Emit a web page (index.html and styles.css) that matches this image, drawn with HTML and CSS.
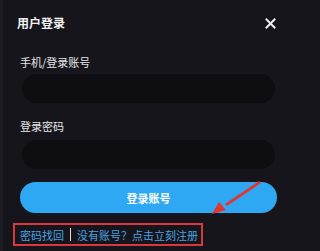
FILE: index.html
```html
<!DOCTYPE html>
<html lang="zh">
<head>
<meta charset="utf-8">
<link rel="stylesheet" href="styles.css">
</head>
<body>
<div class="panel">
  <div class="header">
    <span class="title">用户登录</span>
    <svg class="close" width="11" height="11" viewBox="0 0 11 11"><path d="M1.5 1.5 L9.5 9.5 M9.5 1.5 L1.5 9.5" stroke="#eeeef0" stroke-width="2" stroke-linecap="square"/></svg>
  </div>
  <div class="form">
    <label class="label label-first">手机/登录账号</label>
    <div class="input"></div>
    <label class="label label-second">登录密码</label>
    <div class="input"></div>
    <div class="button">登录账号</div>
  </div>
  <div class="links">
    <span class="link">密码找回</span>
    <span class="sep"></span>
    <span class="link">没有账号？点击立刻注册</span>
  </div>
  <svg class="arrow" width="60" height="36" viewBox="0 0 60 36">
    <polygon points="48,2 50,4 16,27 14,25" fill="#e8322e"/>
    <polygon points="1,35 8,23 15,31" fill="#e8322e"/>
  </svg>
</div>
</body>
</html>
```
FILE: styles.css
```css
html, body {
  margin: 0;
  padding: 0;
  background: #16151b;
}
body {
  font-family: "Noto Sans CJK SC", "Noto Sans", sans-serif;
  width: 289px;
  height: 251px;
  overflow: hidden;
}
.panel {
  position: relative;
  height: 251px;
  box-sizing: border-box;
  border-left: 3px solid #1d1c22;
  padding-top: 14px;
}
.header {
  display: flex;
  align-items: center;
  justify-content: space-between;
  height: 18px;
  padding: 0 13px 0 14px;
}
.title {
  color: #f2f2f4;
  font-size: 12px;
  line-height: 18px;
  font-weight: 700;
}
.close {
  display: block;
}
.form {
  display: flex;
  flex-direction: column;
  padding: 0 12px 0 17px;
}
.label {
  color: #e6e6ea;
  font-size: 11px;
  line-height: 16px;
  padding-left: 0;
}
.label-first {
  margin-top: 22px;
  margin-bottom: 4px;
}
.label-second {
  margin-top: 15px;
  margin-bottom: 6px;
}
.input {
  height: 29px;
  margin: 0 2px;
  border-radius: 15px;
  background: #0e0e12;
}
.button {
  margin-top: 13px;
  height: 31px;
  border-radius: 16px;
  background: #2ea8f2;
  color: #ffffff;
  font-size: 11px;
  font-weight: 700;
  display: flex;
  align-items: center;
  justify-content: center;
}
.links {
  margin: 10px 0 0 10px;
  width: 190px;
  height: 23px;
  box-sizing: border-box;
  border: 2px solid #d63a40;
  display: flex;
  align-items: center;
  padding-left: 5px;
  gap: 6px;
}
.link {
  color: #4aa3e2;
  font-size: 11px;
  line-height: 14px;
}
.sep {
  width: 1px;
  height: 13px;
  background: #e0e0e4;
}
.arrow {
  position: absolute;
  left: 208px;
  top: 179px;
}
```
